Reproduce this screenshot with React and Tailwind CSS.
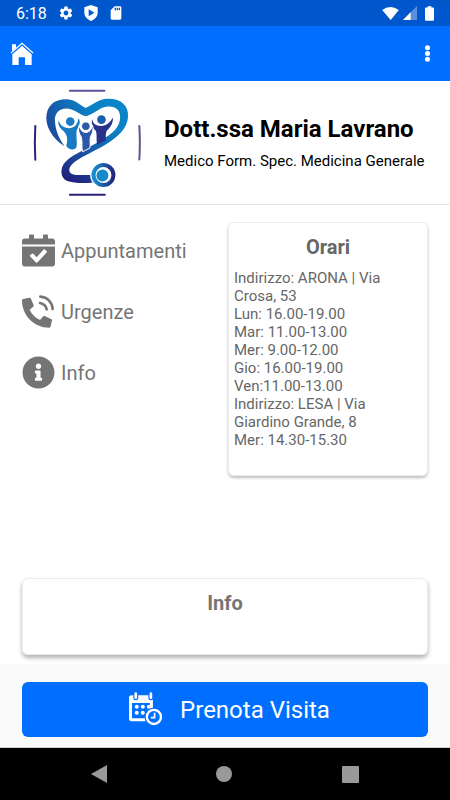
import React from "react";
import { FaInfoCircle } from "react-icons/fa";
import { MdSettings, MdSdCard } from "react-icons/md";

const orari = [
  "Indirizzo: ARONA | Via Crosa, 53",
  "Lun: 16.00-19.00",
  "Mar: 11.00-13.00",
  "Mer: 9.00-12.00",
  "Gio: 16.00-19.00",
  "Ven:11.00-13.00",
  "Indirizzo: LESA | Via Giardino Grande, 8",
  "Mer: 14.30-15.30",
];

function CalendarIcon({ className }) {
  return (
    <svg viewBox="0 0 99 96" className={className} fill="currentColor" aria-hidden="true">
      <path d="M21 12V3q0-3 3-3h9q3 0 3 3v9h27V3q0-3 3-3h9q3 0 3 3v9h12q9 0 9 9v9H0v-9q0-9 9-9z" />
      <path fillRule="evenodd" d="M0 36h99v51q0 9-9 9H9q-9 0-9-9zM24 65l18 19q2 1 4 0l28-30q2-2 0-4l-5-5q-2-1-4 0L44 68l-10-10q-2-2-4 0l-6 4q-1 2 0 3z" />
    </svg>
  );
}

function PhoneIcon({ className }) {
  return (
    <svg viewBox="0 0 99 99" className={className} fill="currentColor" aria-hidden="true">
      <g transform="translate(0 8) scale(.176)">
        <path d="M497.39 361.8l-112-48a24 24 0 0 0-28 6.9l-49.6 60.6A370.66 370.66 0 0 1 130.6 204.11l60.6-49.6a23.94 23.94 0 0 0 6.9-28l-48-112A24.16 24.16 0 0 0 122.6.61l-104 24A24 24 0 0 0 0 48c0 256.5 207.9 464 464 464a24 24 0 0 0 23.4-18.6l24-104a24.29 24.29 0 0 0-14.01-27.6z" />
      </g>
      <g fill="none" stroke="currentColor" strokeWidth="8" strokeLinecap="round">
        <path d="M55 5C76 7 90 21 92 42" />
        <path d="M54 24C65 26 72 32 74 43" />
      </g>
    </svg>
  );
}

function BookingIcon({ className }) {
  return (
    <svg viewBox="24 24 104 104" className={className} aria-hidden="true">
      <path fill="#fff" d="M35 34h56q7 0 7 7v34H89V57H36v44q0 1 1 1h40v9H35q-8 0-8-8V41q0-7 8-7z" />
      <g stroke="#006fff" strokeWidth="15" strokeLinecap="round">
        <path d="M47 30v11M92 30v11" />
      </g>
      <g stroke="#fff" strokeWidth="8" strokeLinecap="round">
        <path d="M47 29v12M92 29v12" />
      </g>
      <g fill="#fff">
        <circle cx="50" cy="68" r="6" />
        <circle cx="68" cy="68" r="6" />
        <circle cx="86" cy="68" r="6" />
        <circle cx="50" cy="86" r="6" />
        <circle cx="68" cy="86" r="6" />
      </g>
      <circle cx="101" cy="98" r="28" fill="#006fff" />
      <circle cx="101" cy="98" r="21" fill="none" stroke="#fff" strokeWidth="7" />
      <path d="M103 86v14H92" fill="none" stroke="#fff" strokeWidth="5" />
    </svg>
  );
}

function Logo({ className }) {
  return (
    <svg viewBox="25 25 325 325" className={className} role="img" aria-label="Logo studio medico">
      <defs>
        <linearGradient id="heart" gradientUnits="userSpaceOnUse" x1="290" y1="60" x2="130" y2="300">
          <stop offset="0" stopColor="#0a86c8" />
          <stop offset=".3" stopColor="#0b80c4" />
          <stop offset=".65" stopColor="#1a55a5" />
          <stop offset="1" stopColor="#20207c" />
        </linearGradient>
        <linearGradient id="lobe" gradientUnits="userSpaceOnUse" x1="66" y1="130" x2="180" y2="70">
          <stop offset="0" stopColor="#1c4c9f" />
          <stop offset="1" stopColor="#0b80c4" />
        </linearGradient>
        <linearGradient id="ring" x1="0" y1="0" x2="1" y2="0">
          <stop offset="0" stopColor="#1590cf" />
          <stop offset="1" stopColor="#22277f" />
        </linearGradient>
      </defs>
      <g fill="none" strokeWidth="6" strokeLinecap="round">
        <path d="M136 30h104M345 136q3 50 0 101" stroke="#5c5498" />
        <path d="M32 136q-3 50 0 102M136 343h105" stroke="#2a237d" />
      </g>
      <path fill="url(#lobe)" d="M120 197C80 172 60 132 66 100C72 68 98 54 128 56C155 58 168 76 184 82L200 75V99L184 107C165 103 150 86 128 84C103 83 90 99 91 120C92 150 105 178 120 197Z" />
      <path fill="url(#heart)" d="M184 82C200 76 220 54 250 54C290 53 313 75 311 108C309 145 280 170 245 191C205 215 160 232 142 252C128 267 132 283 158 284L203 284L206 306C180 310 145 308 128 302C108 294 106 268 118 250C135 225 175 212 215 188C255 166 284 145 287 115C290 88 272 76 250 78C225 80 215 98 184 107Z" />
      <g fill="#177cc1">
        <circle cx="137" cy="123" r="13" />
        <path d="M102 119C107 136 118 142 136 143C153 141 158 130 162 114C168 120 167 133 157 148C153 162 160 193 155 202C148 211 130 207 125 196C131 179 128 162 116 151C105 142 99 131 102 119Z" />
      </g>
      <g fill="#28328a">
        <circle cx="231" cy="117" r="13" fill="#1b5cab" />
        <path d="M203 116C206 130 214 136 230 136C246 136 258 126 265 111C267 125 260 139 247 151C241 165 247 173 243 180L219 193C214 180 219 164 214 151C203 141 200 128 203 116Z" />
      </g>
      <g fill="#2b59a7" stroke="#fff" strokeWidth="3">
        <circle cx="184" cy="137" r="13" />
        <path d="M164 134C167 149 174 155 184 156C196 154 201 147 204 133C208 146 205 157 198 168C195 181 199 193 196 203L174 214C170 199 175 184 170 169C162 158 160 146 164 134Z" />
      </g>
      <circle cx="237" cy="284" r="40" fill="#fff" />
      <circle cx="237" cy="284" r="30" fill="none" stroke="url(#ring)" strokeWidth="12" />
      <circle cx="234" cy="285" r="18" fill="#1589cb" />
    </svg>
  );
}

function StatusBar() {
  return (
    <div className="flex h-[26px] items-center justify-between bg-[#0057cc] px-4 text-white">
      <div className="flex items-center gap-2">
        <span className="w-[34px] pt-0.5 text-base/6">6:18</span>
        <MdSettings className="size-4" />
        <svg viewBox="0 0 42 48" className="mx-0.5 h-4 w-3.5" aria-hidden="true">
          <path fill="#fff" d="M21 0l20 7v15c0 13-8 21-20 26C9 43 1 35 1 22V7z" />
          <path fill="#0057cc" d="M14 13l17 10-17 11z" />
        </svg>
        <MdSdCard className="size-4" />
      </div>
      <div className="flex items-center gap-1">
        <svg viewBox="0 0 51 40" className="h-[13px] w-[17px]" aria-hidden="true">
          <path fill="#fff" d="M0 9Q25-9 51 9L26 40z" />
        </svg>
        <svg viewBox="0 0 42 42" className="size-3.5" aria-hidden="true">
          <path fill="#fff" fillOpacity=".35" d="M42 0v42H0z" />
          <path fill="#fff" d="M23 19v23H0z" />
        </svg>
        <svg viewBox="0 0 28 45" className="ml-1 h-[15px] w-[9px]" aria-hidden="true">
          <path fill="#fff" d="M8 0h12v4h5q3 0 3 3v35q0 3-3 3H3q-3 0-3-3V7q0-3 3-3h5z" />
        </svg>
      </div>
    </div>
  );
}

function AppBar() {
  return (
    <header className="flex h-[55px] items-center justify-between bg-[#006fff] px-2.5 text-white">
      <button type="button" aria-label="Home">
        <svg viewBox="0 0 72 72" className="size-6" aria-hidden="true">
          <path fill="#fff" d="M6 7h12v10L6 28zM36 11l29 26v32H45V46H26v23H7V37z" />
          <path d="M3 33L36 4l33 29" fill="none" stroke="#fff" strokeWidth="4" />
          <path d="M5 36L36 9l31 27" fill="none" stroke="#006fff" strokeWidth="2" />
        </svg>
      </button>
      <button type="button" aria-label="Menu" className="px-2.5">
        <svg viewBox="0 0 15 51" className="h-[17px] w-[5px]" fill="#fff" aria-hidden="true">
          <circle cx="7.500" cy="8" r="7.500" />
          <circle cx="7.500" cy="25.500" r="7.500" />
          <circle cx="7.500" cy="43" r="7.500" />
        </svg>
      </button>
    </header>
  );
}

function MenuItem({ icon: Icon, label }) {
  return (
    <a href="#" className="flex h-[33px] items-center gap-1.5 text-xl">
      <Icon className="size-[33px] shrink-0" />
      {label}
    </a>
  );
}

export default function App() {
  return (
    <div className="flex min-h-screen flex-col bg-white font-['Roboto',sans-serif] text-[#757575]">
      <StatusBar />
      <AppBar />

      <section className="flex h-[124px] items-center gap-[23px] border-b border-[#e4e4e4] pl-[33px] pr-4 text-black">
        <Logo className="size-[108px] shrink-0" />
        <div className="min-w-0">
          <h1 className="whitespace-nowrap text-2xl font-bold">Dott.ssa Maria Lavrano</h1>
          <p className="mt-1 whitespace-nowrap text-[15px]/6">Medico Form. Spec. Medicina Generale</p>
        </div>
      </section>

      <main className="flex flex-1 flex-col justify-between px-[22px] pb-[9px] pt-[17px]">
        <div className="flex items-start justify-between">
          <nav className="flex flex-col gap-7 pt-3">
            <MenuItem icon={CalendarIcon} label="Appuntamenti" />
            <MenuItem icon={PhoneIcon} label="Urgenze" />
            <MenuItem icon={FaInfoCircle} label="Info" />
          </nav>
          <section className="w-[200px] rounded-md border border-[#ececec] px-[5px] pb-[26px] pt-3 shadow-[0_2px_3px_rgba(0,0,0,0.25)]">
            <h2 className="text-center text-xl/6 font-bold text-[#666]">Orari</h2>
            <div className="mt-2.5 text-[15px]/[18px] text-[#666]">
              {orari.map((riga) => (
                <p key={riga}>{riga}</p>
              ))}
            </div>
          </section>
        </div>
        <section className="h-[77px] rounded-md border border-[#ececec] pt-3 shadow-[0_3px_4px_rgba(0,0,0,0.3)]">
          <h2 className="text-center text-xl/6 font-bold">Info</h2>
        </section>
      </main>

      <footer className="border-b border-[#ccc] bg-[#fafafa] px-[22px] pb-2.5 pt-[18px]">
        <button type="button" className="flex h-[55px] w-full items-center justify-center gap-[17px] rounded-md bg-[#006fff] pl-2 text-2xl text-white">
          <BookingIcon className="size-[35px]" />
          Prenota Visita
        </button>
      </footer>

      <div className="flex h-[52px] items-center justify-around bg-black px-9">
        <button type="button" aria-label="Indietro">
          <svg viewBox="0 0 16 18" className="h-[18px] w-4" aria-hidden="true">
            <path fill="#999" d="M16 0v18L0 9z" />
          </svg>
        </button>
        <button type="button" aria-label="Home" className="size-4 rounded-full bg-[#999]" />
        <button type="button" aria-label="Recenti" className="size-[17px] rounded-[1px] bg-[#999]" />
      </div>
    </div>
  );
}
